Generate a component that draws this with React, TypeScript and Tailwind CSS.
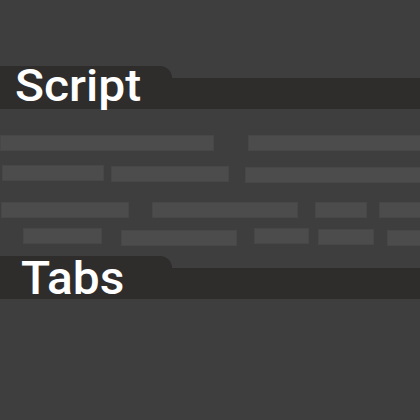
import React from "react";

const font = { fontFamily: "Roboto, 'Liberation Sans', sans-serif" };

function Bar({ w, ml, mt = 0 }: { w: string; ml: string; mt?: number }) {
  const mtClass = mt === 1 ? "mt-px" : mt === 2 ? "mt-[2px]" : mt === 3 ? "mt-[3px]" : "mt-0";
  return <div className={`${w} ${ml} ${mtClass} h-4 shrink-0 border border-[#474747] bg-[#4c4c4c]`} />;
}

export default function App() {
  return (
    <div className="w-[420px] h-[420px] overflow-hidden bg-[#3e3e3e] flex flex-col" style={font}>
      {/* Script header */}
      <div className="mt-[66px] flex items-end h-[43px] shrink-0">
        <div className="w-[172px] h-[43px] bg-[#2e2d2c] rounded-tr-[12px] pl-[15px] shrink-0">
          <span className="text-white text-[44px] leading-[41px] font-medium inline-block origin-left scale-x-[1.09]">Script</span>
        </div>
        <div className="flex-1 h-[31px] bg-[#2e2d2c]" />
      </div>

      {/* Row 1 */}
      <div className="mt-[26px] flex items-start h-4 shrink-0">
        <Bar w="w-[214px]" ml="ml-0" />
        <Bar w="w-[180px]" ml="ml-[34px]" />
      </div>

      {/* Row 2 */}
      <div className="mt-[14px] flex items-start h-[18px] shrink-0">
        <Bar w="w-[102px]" ml="ml-[2px]" />
        <Bar w="w-[118px]" ml="ml-[7px]" mt={1} />
        <Bar w="w-[180px]" ml="ml-[16px]" mt={2} />
      </div>

      {/* Row 3 */}
      <div className="mt-[19px] flex items-start h-4 shrink-0">
        <Bar w="w-[128px]" ml="ml-px" />
        <Bar w="w-[146px]" ml="ml-[23px]" />
        <Bar w="w-[52px]" ml="ml-[17px]" />
        <Bar w="w-[50px]" ml="ml-[12px]" />
      </div>

      {/* Row 4 */}
      <div className="mt-[10px] flex items-start h-[19px] shrink-0">
        <Bar w="w-[79px]" ml="ml-[23px]" />
        <Bar w="w-[116px]" ml="ml-[19px]" mt={2} />
        <Bar w="w-[55px]" ml="ml-[17px]" />
        <Bar w="w-[56px]" ml="ml-[9px]" mt={1} />
        <Bar w="w-[50px]" ml="ml-[13px]" mt={2} />
      </div>

      {/* Tabs header */}
      <div className="mt-[9px] flex items-end h-[43px] shrink-0">
        <div className="w-[172px] h-[43px] bg-[#2e2d2c] rounded-tr-[12px] pl-[21px] shrink-0">
          <span className="text-white text-[46px] leading-[44px] font-medium inline-block origin-left scale-x-[1.04]">Tabs</span>
        </div>
        <div className="flex-1 h-[31px] bg-[#2e2d2c]" />
      </div>
    </div>
  );
}
